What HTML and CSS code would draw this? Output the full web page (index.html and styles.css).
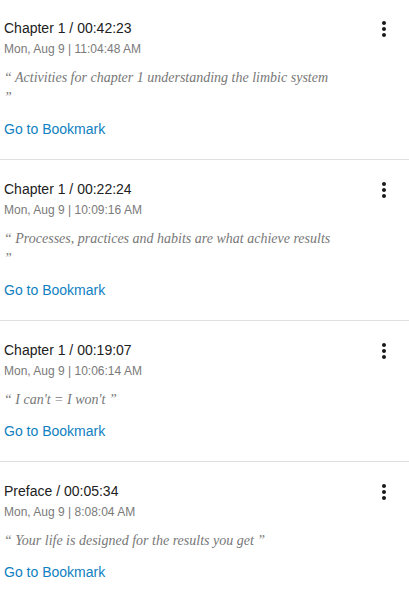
FILE: index.html
```html
<!DOCTYPE html>
<html>
<head>
<meta charset="utf-8">
<link rel="stylesheet" href="styles.css">
</head>
<body>
<ul class="bookmarks">
  <li class="bookmark">
    <div class="bookmark-main">
      <div class="bookmark-title">Chapter 1 / 00:42:23</div>
      <div class="bookmark-date">Mon, Aug 9 | 11:04:48 AM</div>
      <div class="bookmark-quote">“ Activities for chapter 1 understanding the limbic system ”</div>
      <a class="bookmark-link" href="#">Go to Bookmark</a>
    </div>
    <svg class="kebab" viewBox="0 0 24 24" width="24" height="24"><path d="M12 8c1.1 0 2-.9 2-2s-.9-2-2-2-2 .9-2 2 .9 2 2 2zm0 2c-1.1 0-2 .9-2 2s.9 2 2 2 2-.9 2-2-.9-2-2-2zm0 6c-1.1 0-2 .9-2 2s.9 2 2 2 2-.9 2-2-.9-2-2-2z"/></svg>
  </li>
  <li class="bookmark">
    <div class="bookmark-main">
      <div class="bookmark-title">Chapter 1 / 00:22:24</div>
      <div class="bookmark-date">Mon, Aug 9 | 10:09:16 AM</div>
      <div class="bookmark-quote">“ Processes, practices and habits are what achieve results ”</div>
      <a class="bookmark-link" href="#">Go to Bookmark</a>
    </div>
    <svg class="kebab" viewBox="0 0 24 24" width="24" height="24"><path d="M12 8c1.1 0 2-.9 2-2s-.9-2-2-2-2 .9-2 2 .9 2 2 2zm0 2c-1.1 0-2 .9-2 2s.9 2 2 2 2-.9 2-2-.9-2-2-2zm0 6c-1.1 0-2 .9-2 2s.9 2 2 2 2-.9 2-2-.9-2-2-2z"/></svg>
  </li>
  <li class="bookmark">
    <div class="bookmark-main">
      <div class="bookmark-title">Chapter 1 / 00:19:07</div>
      <div class="bookmark-date">Mon, Aug 9 | 10:06:14 AM</div>
      <div class="bookmark-quote">“ I can't = I won't ”</div>
      <a class="bookmark-link" href="#">Go to Bookmark</a>
    </div>
    <svg class="kebab" viewBox="0 0 24 24" width="24" height="24"><path d="M12 8c1.1 0 2-.9 2-2s-.9-2-2-2-2 .9-2 2 .9 2 2 2zm0 2c-1.1 0-2 .9-2 2s.9 2 2 2 2-.9 2-2-.9-2-2-2zm0 6c-1.1 0-2 .9-2 2s.9 2 2 2 2-.9 2-2-.9-2-2-2z"/></svg>
  </li>
  <li class="bookmark">
    <div class="bookmark-main">
      <div class="bookmark-title">Preface / 00:05:34</div>
      <div class="bookmark-date">Mon, Aug 9 | 8:08:04 AM</div>
      <div class="bookmark-quote">“ Your life is designed for the results you get ”</div>
      <a class="bookmark-link" href="#">Go to Bookmark</a>
    </div>
    <svg class="kebab" viewBox="0 0 24 24" width="24" height="24"><path d="M12 8c1.1 0 2-.9 2-2s-.9-2-2-2-2 .9-2 2 .9 2 2 2zm0 2c-1.1 0-2 .9-2 2s.9 2 2 2 2-.9 2-2-.9-2-2-2zm0 6c-1.1 0-2 .9-2 2s.9 2 2 2 2-.9 2-2-.9-2-2-2z"/></svg>
  </li>
</ul>
</body>
</html>
```

FILE: styles.css
```css
html, body {
  margin: 0;
  padding: 0;
  background: #ffffff;
  font-family: "Liberation Sans", Arial, sans-serif;
}

.bookmarks {
  list-style: none;
  margin: 0;
  padding: 0;
}

.bookmark {
  display: flex;
  align-items: flex-start;
  padding: 19px 13px 20px 4px;
  border-bottom: 1px solid #e0e0e0;
}

.bookmark:first-child {
  padding-top: 18px;
}

.bookmark-main {
  flex: 1;
  display: flex;
  flex-direction: column;
  align-items: flex-start;
  min-width: 0;
}

.bookmark-title {
  font-size: 14px;
  line-height: 20px;
  color: #212121;
}

.bookmark-date {
  margin-top: 3px;
  font-size: 12px;
  line-height: 16px;
  color: #7a7a7a;
}

.bookmark-quote {
  margin-top: 11px;
  max-width: 332px;
  font-family: "Liberation Serif", "Times New Roman", serif;
  font-style: italic;
  font-size: 14px;
  line-height: 20px;
  color: #777777;
}

.bookmark-link {
  margin-top: 11px;
  font-size: 14px;
  line-height: 20px;
  color: #0f80c1;
  text-decoration: none;
}

.kebab {
  flex: none;
  margin-top: -1px;
  fill: #1a1a1a;
}
```
